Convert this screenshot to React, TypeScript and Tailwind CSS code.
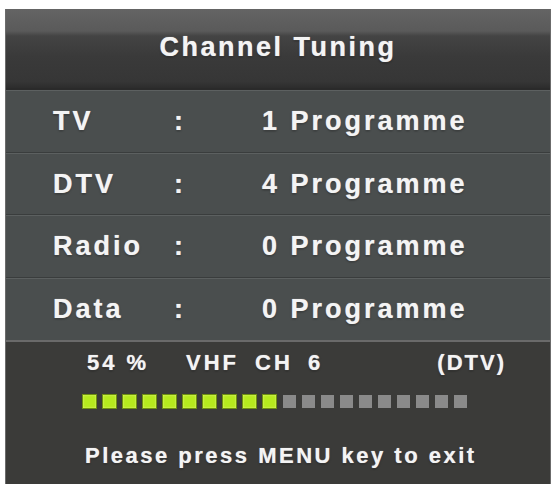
import React from "react";

const rows = [
  { label: "TV", count: 1 },
  { label: "DTV", count: 4 },
  { label: "Radio", count: 0 },
  { label: "Data", count: 0 },
];

const glow = "[text-shadow:0_0_1px_rgba(255,255,255,0.7),0_1px_2px_rgba(0,0,0,0.5)]";

export default function App() {
  const filled = 10;
  const total = 20;

  return (
    <div className="h-[487px] w-[556px] overflow-hidden bg-white pt-[9px] pl-[5px] font-['Liberation_Sans',Arial,sans-serif] font-bold text-[#f4f4f4]">
      <div className="flex h-[475px] w-[546px] flex-col border-x border-[#6b6b6b] bg-[#3b3b39]">
        {/* header */}
        <div className="flex h-[81px] items-start justify-center border-b-2 border-[#2a2a2a] bg-[linear-gradient(to_bottom,#646464_0%,#5a5a5a_28%,#444444_34%,#3a3a3a_60%,#363636_92%,#2c2c2c_100%)] pt-[22px]">
          <h1 className={`text-[27px] leading-[32px] tracking-[2.5px] ${glow}`}>Channel Tuning</h1>
        </div>

        {/* counts */}
        {rows.map((row, i) => (
          <div
            key={row.label}
            className={`flex h-[62.5px] items-center border-t border-[#5c6060] bg-[#4a4e4e] pl-[47px] ${
              i < rows.length - 1 ? "border-b border-b-[#3a3d3d]" : ""
            }`}
          >
            <span className={`w-[121px] text-[27px] leading-[32px] tracking-[3px] ${glow}`}>{row.label}</span>
            <span className={`w-[88px] text-[27px] leading-[32px] ${glow}`}>:</span>
            <span className={`text-[27px] leading-[32px] tracking-[3px] ${glow}`}>
              {row.count} Programme
            </span>
          </div>
        ))}

        {/* progress */}
        <div className="flex flex-1 flex-col border-t-2 border-[#6a6a6a] pt-[8px]">
          <div className={`flex pl-[81px] text-[22px] leading-[26px] tracking-[3px] ${glow}`}>
            <span className="w-[99px]">54 %</span>
            <span className="w-[69px]">VHF</span>
            <span className="w-[53px]">CH</span>
            <span className="flex-1">6</span>
            <span className="pr-[44px] tracking-[2px]">(DTV)</span>
          </div>

          <div className="mt-[18px] flex items-center pl-[76px]">
            {Array.from({ length: total }, (_, i) =>
              i < filled ? (
                <span
                  key={i}
                  className="mr-[5px] h-[15px] w-[15px] border border-[#6f8f10] bg-[#b6ea1e] shadow-[inset_0_0_2px_rgba(255,255,180,0.8)]"
                />
              ) : (
                <span key={i} className="ml-[1px] mr-[5px] h-[13px] w-[13px] bg-[#8a8a8a]" />
              )
            )}
          </div>

          <div className={`mt-[34px] pl-[79px] text-[22px] leading-[26px] tracking-[2.5px] ${glow}`}>
            Please press MENU key to exit
          </div>
        </div>
      </div>
    </div>
  );
}
